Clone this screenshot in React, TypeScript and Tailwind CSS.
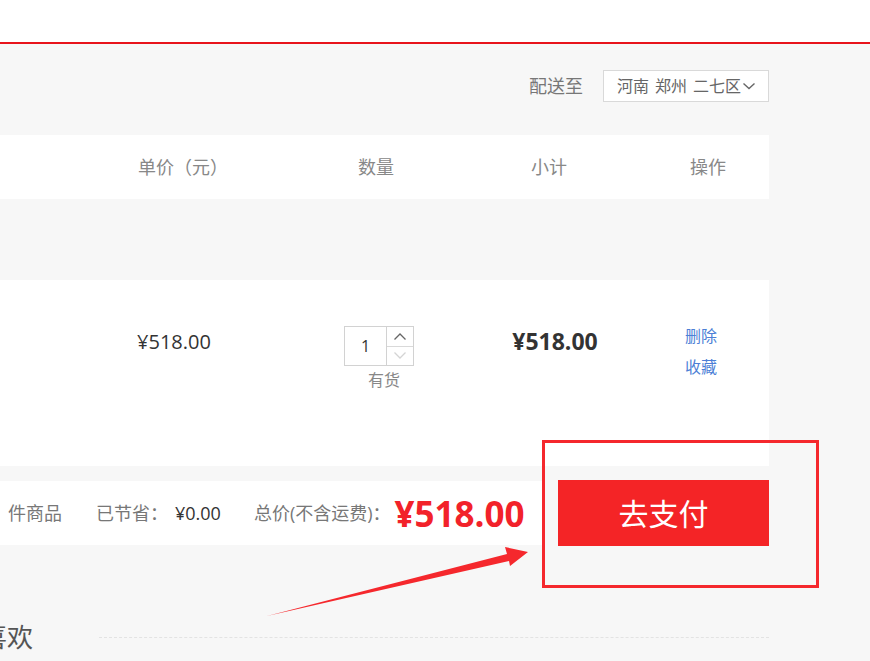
import React from "react";

const font = "font-['Open_Sans','Noto_Sans_CJK_SC',sans-serif]";

export default function App() {
  return (
    <div className={`relative w-[870px] h-[661px] overflow-hidden bg-[#f7f7f7] ${font}`}>
      <div className="h-[42px] bg-white" />
      <div className="h-[2px] bg-[#e8141c]" />

      {/* delivery row */}
      <div className="mt-[26px] flex h-[32px] items-center justify-end pr-[101px]">
        <span className="text-[18px] leading-none text-[#777]">配送至</span>
        <div className="ml-[20px] flex h-[32px] w-[166px] items-center border border-[#d9d9d9] bg-white pl-[13px] text-[16px] leading-none text-[#666]">
          <div className="flex gap-[6px]">
            <span>河南</span>
            <span>郑州</span>
            <span>二七区</span>
          </div>
          <svg width="14" height="10" viewBox="0 0 14 10" className="ml-[1px]">
            <path d="M1.5 2.5 L7 7.5 L12.5 2.5" fill="none" stroke="#666" strokeWidth="1.4" />
          </svg>
        </div>
      </div>

      {/* header */}
      <div className="mt-[33px] flex h-[64px] w-[769px] items-center bg-white text-[18px] text-[#888]">
        <div className="w-[108px]" />
        <div className="w-[150px] text-center">单价（元）</div>
        <div className="w-[43px]" />
        <div className="w-[150px] text-center">数量</div>
        <div className="w-[23px]" />
        <div className="w-[150px] text-center">小计</div>
        <div className="w-[24px]" />
        <div className="w-[120px] text-center">操作</div>
      </div>

      {/* item */}
      <div className="mt-[81px] flex h-[186px] w-[769px] items-start bg-white">
        <div className="w-[99px]" />
        <div className="w-[150px] pt-[49px] text-center text-[20px] leading-[26px] text-[#333]">¥518.00</div>
        <div className="w-[55px]" />
        <div className="flex w-[150px] flex-col items-center pt-[46px]">
          <div className="flex h-[40px] w-[70px] border border-[#d2d2d2] bg-white">
            <div className="flex w-[42px] items-center justify-center border-r border-[#d2d2d2] text-[16px] text-[#333]">1</div>
            <div className="flex flex-1 flex-col">
              <div className="flex flex-1 items-center justify-center border-b border-[#d9d9d9]">
                <svg width="14" height="9" viewBox="0 0 14 9">
                  <path d="M1.5 7.5 L7 2 L12.5 7.5" fill="none" stroke="#666" strokeWidth="1.3" />
                </svg>
              </div>
              <div className="flex flex-1 items-center justify-center">
                <svg width="14" height="9" viewBox="0 0 14 9">
                  <path d="M1.5 1.5 L7 7 L12.5 1.5" fill="none" stroke="#d4d4d4" strokeWidth="1.3" />
                </svg>
              </div>
            </div>
          </div>
          <div className="ml-[10px] mt-[3px] text-[16px] leading-[22px] text-[#888]">有货</div>
        </div>
        <div className="w-[26px]" />
        <div className="w-[150px] pt-[47px] text-center text-[23px] font-bold leading-[28px] text-[#333]">¥518.00</div>
        <div className="w-[31px]" />
        <div className="flex w-[80px] flex-col items-center pt-[41px] text-[16px] leading-[31px] text-[#4d7fd6]">
          <span>删除</span>
          <span>收藏</span>
        </div>
      </div>

      {/* footer */}
      <div className="mt-[15px] flex h-[64px] items-center">
        <div className="flex h-[64px] w-[545px] items-center bg-white pl-[8px] text-[18px] text-[#777]">
          <span>件商品</span>
          <span className="ml-[34px]">已节省：</span>
          <span className="ml-[7px] text-[#333]">¥0.00</span>
          <span className="ml-[33px]">总价(不含运费)：</span>
          <span className="ml-[4px] text-[35px] font-bold leading-none text-[#f2222a]">¥518.00</span>
        </div>
        <button className="ml-[13px] flex h-[66px] w-[211px] shrink-0 items-center justify-center bg-[#f42426] text-[30px] text-white">
          去支付
        </button>
      </div>

      {/* guess you like */}
      <div className="mt-[75px] flex h-[34px] items-center">
        <span className="-ml-[71px] text-[26px] leading-[34px] text-[#555] whitespace-nowrap">猜你喜欢</span>
        <div className="ml-[66px] w-[670px] border-t border-dashed border-[#e3e3e3]" />
      </div>

      {/* annotation box */}
      <div className="absolute left-[542px] top-[440px] h-[148px] w-[277px] border-[3px] border-[#f5282d]" />

      {/* annotation arrow */}
      <svg className="absolute left-0 top-0" width="870" height="661" viewBox="0 0 870 661">
        <polygon
          points="267,616 507,554 505,547 528,552 510,566 509,561"
          fill="#f5282d"
        />
      </svg>
    </div>
  );
}
